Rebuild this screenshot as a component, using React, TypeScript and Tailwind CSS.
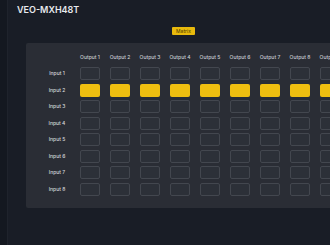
import React from "react";

const outputs = ["Output 1", "Output 2", "Output 3", "Output 4", "Output 5", "Output 6", "Output 7", "Output 8", "Output 9"];
const inputs = ["Input 1", "Input 2", "Input 3", "Input 4", "Input 5", "Input 6", "Input 7", "Input 8"];

export default function App() {
  return (
    <div className="w-[330px] h-[245px] overflow-hidden bg-[#191d26] flex font-['Inter',sans-serif]">
      <div className="w-[8px] shrink-0 bg-[#141820] border-r border-[#1f232c]" />
      <div className="flex-1 min-w-0 flex flex-col">
        <div className="h-[19px] shrink-0 pl-[9px] flex items-center">
          <span className="text-[9px] font-semibold text-[#e8eaee] leading-none">VEO-MXH48T</span>
        </div>
        <div className="h-[24px] shrink-0 flex items-center pl-[164px]">
          <span className="h-[8px] w-[23px] rounded-[1px] bg-[#e8b90c] text-[#4a3a00] text-[5px] leading-none flex items-center justify-center">Matrix</span>
        </div>
        <div className="ml-[18px] w-[400px] h-[165px] shrink-0 bg-[#2a2d35] rounded-[2px] pt-[10px] pb-[9px]">
          <div className="grid grid-cols-[54px_repeat(10,30px)] h-[9px] items-center">
            <div />
            {outputs.map((o) => (
              <div key={o} className="w-[20px] flex justify-center">
                <span className="text-[5px] font-medium text-[#c9ccd2] whitespace-nowrap leading-none">{o}</span>
              </div>
            ))}
          </div>
          <div className="mt-[5px] flex flex-col">
            {inputs.map((inp, r) => (
              <div key={inp} className="grid grid-cols-[54px_repeat(10,30px)] h-[16.5px] items-start">
                <div className="h-[13px] pl-[14px] pr-[6px] flex items-center justify-center">
                  <span className="text-[5px] font-medium text-[#d4d6db] whitespace-nowrap leading-none">{inp}</span>
                </div>
                {outputs.map((o) =>
                  r === 1 ? (
                    <div key={o} className="w-[20px] h-[13px] rounded-[2px] bg-[#f0bf10]" />
                  ) : (
                    <div key={o} className="w-[20px] h-[13px] rounded-[2px] border border-[#43474f] bg-[#2c3038]" />
                  )
                )}
              </div>
            ))}
          </div>
        </div>
      </div>
    </div>
  );
}
